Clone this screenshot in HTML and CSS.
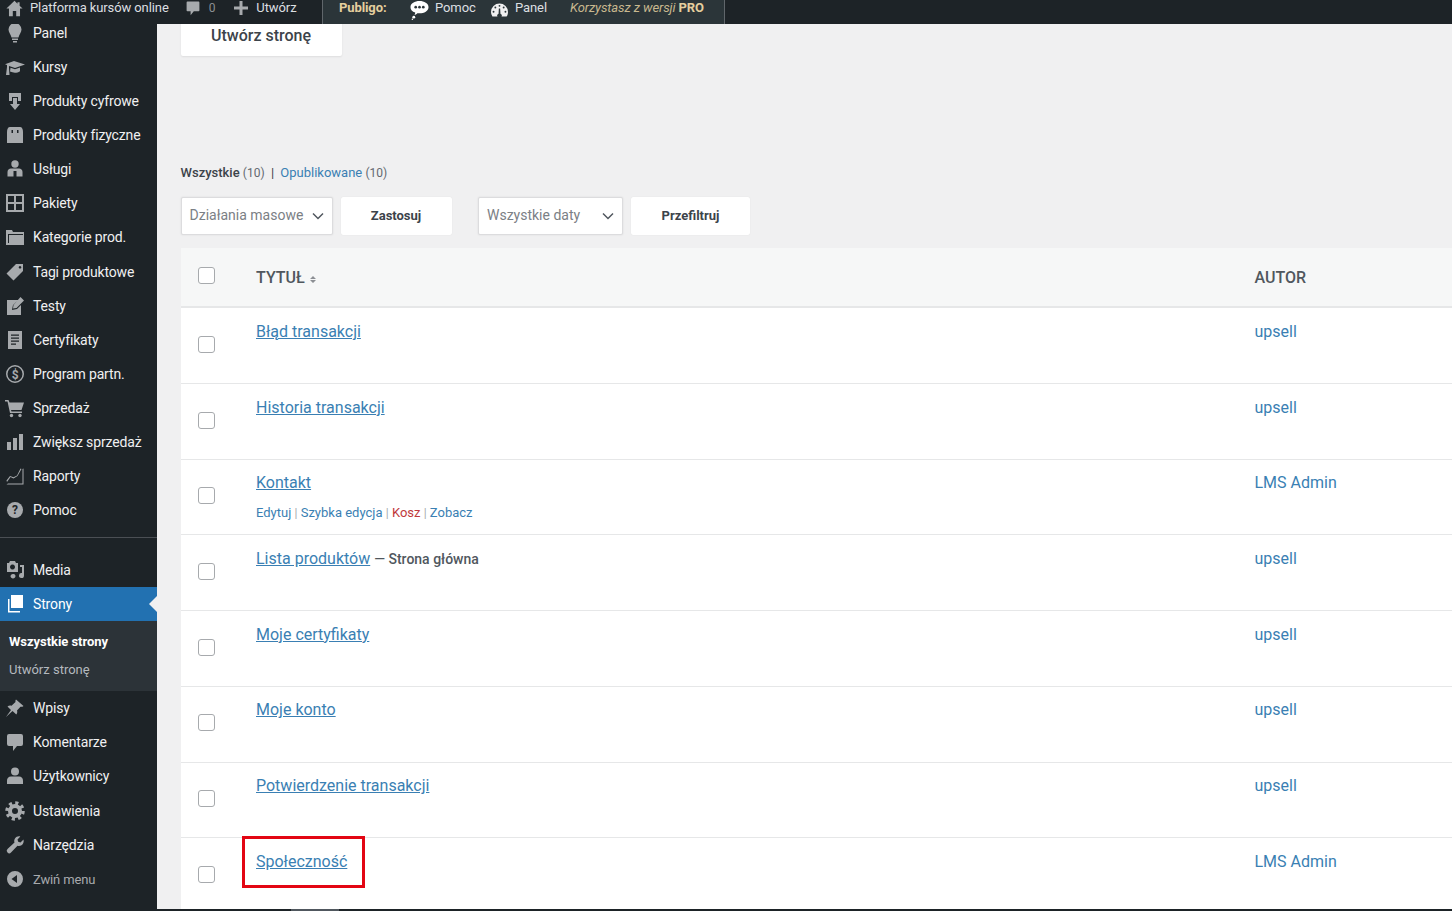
FILE: index.html
```html
<!DOCTYPE html>
<html lang="pl">
<head>
    <meta charset="UTF-8">
    <title>Strony</title>
    <link rel="stylesheet" href="styles.css">
</head>
<body>
<div class="page">
    <div class="topbar">
        <div class="bar-left">
            <svg class="bar-home" viewBox="0 0 20 20"><path d="M10 1 0.5 10h3v9h4.500v-6h4v6H16.500v-9h3L16 6.700V2.500h-2.500v1.900z"/></svg>
            <span class="bar-site">Platforma kursów online</span>
            <svg class="bar-comment" viewBox="0 0 20 20"><path d="M3 2h14a1 1 0 0 1 1 1v10a1 1 0 0 1-1 1h-6l-4 5v-5H3a1 1 0 0 1-1-1V3a1 1 0 0 1 1-1z"/></svg>
            <span class="bar-count">0</span>
            <svg class="bar-plus" viewBox="0 0 14 14"><path d="M5.500 0h3v5.500H14v3H8.500V14h-3V8.500H0v-3h5.500z"/></svg>
            <span class="bar-new">Utwórz</span>
        </div>
        <div class="bar-publigo">
            <strong class="publigo-name">Publigo:</strong>
            <svg class="chat-icon" viewBox="0 0 20 20"><path d="M10 0c5 0 9.500 2.500 9.500 6.500S15 13 10 13c-.8 0-1.600 0-2.300-.2C6.800 14 5.500 14.500 4.700 14.500c.5-.7.8-1.500.8-2.400C2.300 11 .5 9 .5 6.500.5 2.500 5 0 10 0z"/><circle cx="4" cy="17" r="1.500"/><circle cx="2.500" cy="19.200" r=".8"/><circle cx="6" cy="6.500" r="1.400" fill="#2b3539"/><circle cx="10" cy="6.500" r="1.400" fill="#2b3539"/><circle cx="14" cy="6.500" r="1.400" fill="#2b3539"/></svg>
            <span class="publigo-help">Pomoc</span>
            <svg class="gauge-icon" viewBox="0 0 18 14"><path d="M9 0a9 9 0 0 1 9 9c0 1.900-.5 3.600-1.500 5h-15A9 9 0 0 1 0 9a9 9 0 0 1 9-9z"/><g class="gauge-marks"><circle cx="9" cy="2.600" r="1"/><circle cx="4.600" cy="4.300" r="1"/><circle cx="13.400" cy="4.300" r="1"/><circle cx="2.700" cy="8.800" r="1"/><circle cx="15.300" cy="8.800" r="1"/><path d="M8.300 5.500h1.400l.3 5.600a2.300 2.300 0 1 1-2 0z"/></g></svg>
            <span class="publigo-panel">Panel</span>
            <span class="publigo-pro"><em>Korzystasz z wersji</em> <strong>PRO</strong></span>
        </div>
    </div>

    <div class="layout">
        <nav class="sidebar">
            <ul class="menu">
                <li><svg viewBox="0 0 20 20"><path d="M10 0a6.500 6.500 0 0 1 6.500 6.500c0 3-2.500 5-3 8h-7c-.5-3-3-5-3-8A6.500 6.500 0 0 1 10 0zM7 15.500h6V17H7zM8 18h4v1.500H8z"/></svg>Panel</li>
                <li><svg viewBox="0 0 20 20"><path d="M9 4 20 7.500 10 11 4 9v2l.5 7H1l1-8V8L0 7.200zM5.500 10.800 10 12.300l5-1.700v3.600c-3 2-6.500 2-10 .4z"/></svg>Kursy</li>
                <li><svg viewBox="0 0 20 20"><path d="M4 2h12v8h-3V6H7v4H4zM8 7h4v6h3l-5 6-5-6h3z"/></svg>Produkty cyfrowe</li>
                <li><svg viewBox="0 0 20 20"><path d="M5 2h10c2 0 3 2 3 5v11H2V7c0-3 1-5 3-5zM6.500 5v3h1.500V5zM12 5v3h1.500V5z"/></svg>Produkty fizyczne</li>
                <li><svg viewBox="0 0 20 20"><circle cx="10" cy="5" r="3.700"/><path d="M6 9.500h8c2 0 3.500 1.500 3.500 3.500v4.500h-6V12h-3v5.500h-6V13c0-2 1.500-3.500 3.500-3.500z"/></svg>Usługi</li>
                <li><svg viewBox="0 0 20 20"><path d="M1 1h18v18H1zM3 3v6h6V3zM11 3v6h6V3zM3 11v6h6v-6zM11 11v6h6v-6z"/></svg>Pakiety</li>
                <li><svg viewBox="0 0 20 20"><path d="M1 3h6l1 2h11v13H1zM3 7v9h15V7z"/><path d="M4 8h15v10H4z"/></svg>Kategorie prod.</li>
                <li><svg viewBox="0 0 20 20"><path d="M11 2h7v7l-9.500 9.500L1.500 11.500zM15 4a1.300 1.300 0 1 0 .01 0z" fill-rule="evenodd"/></svg>Tagi produktowe</li>
                <li><svg viewBox="0 0 20 20"><path d="M2 4h11L8 9l-1 5 5-1 4-4v10H2zM15.500 1 19 4.500 11.500 12 8 12.500l.5-3.500z"/></svg>Testy</li>
                <li><svg viewBox="0 0 20 20"><path d="M3 1h14v18H3zM6 4.500v1.200h8V4.500zM6 7.500v1.200h8V7.500zM6 10.500v1.200h8v-1.200zM6 13.500v1.200h5v-1.200z" fill-rule="evenodd"/></svg>Certyfikaty</li>
                <li><svg viewBox="0 0 20 20"><path d="M10 1a9 9 0 1 1 0 18 9 9 0 0 1 0-18zM10 2.500a7.500 7.500 0 1 0 0 15 7.500 7.500 0 0 0 0-15z" fill-rule="evenodd"/><text x="10" y="14.500" class="icon-glyph">$</text></svg>Program partn.</li>
                <li><svg viewBox="0 0 20 20"><path d="M0 2h3.500l1 2.500H19l-2.500 7.500H6l.5 1.500H17V15H5L2.500 3.500H0z"/><circle cx="6.500" cy="17.500" r="1.700"/><circle cx="15" cy="17.500" r="1.700"/></svg>Sprzedaż</li>
                <li><svg viewBox="0 0 20 20"><path d="M2 10h4v8H2zM8 6h4v12H8zM14 2h4v16h-4z"/></svg>Zwiększ sprzedaż</li>
                <li><svg viewBox="0 0 20 20"><path d="M1.500 18.500h17v-16l-1 .5v14.500H3z"/><path d="M2 16l3.500-5 3 1.500 4-2.500 4-7-1-.5L12 9.500 8.500 11.300 5 10 1.500 14.500z"/></svg>Raporty</li>
                <li><svg viewBox="0 0 20 20"><circle cx="10" cy="10" r="8"/><text x="10" y="14.300" class="icon-glyph icon-dark">?</text></svg>Pomoc</li>
            </ul>
            <div class="menu-sep"></div>
            <ul class="menu">
                <li><svg viewBox="0 0 20 20"><path d="M2 3h2l1-2h5l1 2h2v9H2zM7.500 4.500a2.500 2.500 0 1 0 .01 0zM15 5h4v10.500a2.500 2.500 0 1 1-2-2.400V7h-2zM8 14c1.200-.3 2.500.5 2.500 2s-1.200 2.500-2.500 2.500-2.500-1-2.500-2.200c0-1.100 1-2 2.500-2.300z" fill-rule="evenodd"/></svg>Media</li>
                <li class="menu-active"><svg viewBox="0 0 20 20"><path d="M6 1h12v13H6z"/><path d="M3 5h1.500v12H15v1.500H3z"/></svg>Strony</li>
            </ul>
            <ul class="submenu">
                <li class="submenu-current">Wszystkie strony</li>
                <li>Utwórz stronę</li>
            </ul>
            <ul class="menu">
                <li><svg viewBox="0 0 20 20"><path d="M11 1.500 18.500 8c-1 .8-2 1-3 .7L12 12.500c.5 1.500.3 2.800-.7 4L7.500 13 1 19l5-7-3.500-3.500c1.200-1 2.500-1.300 4-.8L10.500 4c-.2-1 0-2 .5-2.500z"/></svg>Wpisy</li>
                <li><svg viewBox="0 0 20 20"><path d="M4 2h12a2 2 0 0 1 2 2v8a2 2 0 0 1-2 2h-4l-4 5v-5H4a2 2 0 0 1-2-2V4a2 2 0 0 1 2-2z"/></svg>Komentarze</li>
                <li><svg viewBox="0 0 20 20"><circle cx="10" cy="5.500" r="4"/><path d="M6 10.500h8c2.500 0 4 1.700 4 4v3.500H2v-3.500c0-2.300 1.500-4 4-4z"/></svg>Użytkownicy</li>
                <li><svg viewBox="0 0 20 20"><circle cx="10" cy="10" r="5" fill="none" stroke-width="4" class="gear-ring"/><circle cx="10" cy="10" r="8" fill="none" stroke-width="3.500" stroke-dasharray="3.100 3.180" class="gear-ring"/></svg>Ustawienia</li>
                <li><svg viewBox="0 0 20 20"><path d="M18.500 4.500c.6 2.300-.2 4.500-2 5.700-1.300.8-2.700.9-4 .5L6 17.500a2.400 2.400 0 0 1-3.500-3.500l7-6.500c-.5-1.400-.3-2.900.5-4.100C11.200 1.700 13.300 1 15.300 1.500L12.500 4.500l.7 2.300 2.300.7z"/></svg>Narzędzia</li>
                <li class="menu-collapse"><svg viewBox="0 0 20 20"><path d="M10 2a8 8 0 1 1 0 16 8 8 0 0 1 0-16zM12 6l-5.500 4 5.500 4z" fill-rule="evenodd"/></svg>Zwiń menu</li>
            </ul>
        </nav>

        <main class="content">
            <div class="new-page">Utwórz stronę</div>

            <div class="views">
                <strong>Wszystkie</strong> <span class="count">(10)</span>
                <span class="views-sep">|</span>
                <a>Opublikowane</a> <span class="count">(10)</span>
            </div>

            <div class="filters">
                <div class="select select-bulk">Działania masowe<svg viewBox="0 0 12 8"><path d="M1 1.500 6 6.500l5-5" /></svg></div>
                <div class="action action-apply">Zastosuj</div>
                <div class="select select-dates">Wszystkie daty<svg viewBox="0 0 12 8"><path d="M1 1.500 6 6.500l5-5" /></svg></div>
                <div class="action action-filter">Przefiltruj</div>
            </div>

            <div class="list">
                <div class="list-head">
                    <div class="cell-check"><span class="checkbox"></span></div>
                    <div class="head-title">TYTUŁ <svg class="sort" viewBox="0 0 8 7"><path d="M4 0 7 3H1zM1 4h6L4 7z"/></svg></div>
                    <div class="head-author">AUTOR</div>
                </div>
                <div class="row">
                    <div class="cell-check"><span class="checkbox"></span></div>
                    <div class="cell-title"><a class="title-link">Błąd transakcji</a></div>
                    <div class="cell-author">upsell</div>
                </div>
                <div class="row">
                    <div class="cell-check"><span class="checkbox"></span></div>
                    <div class="cell-title"><a class="title-link">Historia transakcji</a></div>
                    <div class="cell-author">upsell</div>
                </div>
                <div class="row">
                    <div class="cell-check"><span class="checkbox"></span></div>
                    <div class="cell-title">
                        <a class="title-link">Kontakt</a>
                        <div class="row-actions">
                            <a>Edytuj</a> <span class="pipe">|</span> <a>Szybka edycja</a> <span class="pipe">|</span> <a class="trash">Kosz</a> <span class="pipe">|</span> <a>Zobacz</a>
                        </div>
                    </div>
                    <div class="cell-author">LMS Admin</div>
                </div>
                <div class="row">
                    <div class="cell-check"><span class="checkbox"></span></div>
                    <div class="cell-title"><a class="title-link">Lista produktów</a> <span class="post-state">— Strona główna</span></div>
                    <div class="cell-author">upsell</div>
                </div>
                <div class="row">
                    <div class="cell-check"><span class="checkbox"></span></div>
                    <div class="cell-title"><a class="title-link">Moje certyfikaty</a></div>
                    <div class="cell-author">upsell</div>
                </div>
                <div class="row">
                    <div class="cell-check"><span class="checkbox"></span></div>
                    <div class="cell-title"><a class="title-link">Moje konto</a></div>
                    <div class="cell-author">upsell</div>
                </div>
                <div class="row">
                    <div class="cell-check"><span class="checkbox"></span></div>
                    <div class="cell-title"><a class="title-link">Potwierdzenie transakcji</a></div>
                    <div class="cell-author">upsell</div>
                </div>
                <div class="row">
                    <div class="cell-check"><span class="checkbox"></span></div>
                    <div class="cell-title cell-marked"><a class="title-link">Społeczność</a><span class="highlight"></span></div>
                    <div class="cell-author">LMS Admin</div>
                </div>
            </div>
        </main>
    </div>
    <div class="bottom-strip"><span class="bottom-thumb"></span></div>
</div>
</body>
</html>
```

FILE: styles.css
```css
* {
    box-sizing: border-box;
}
html, body {
    margin: 0;
    height: 100%;
    overflow: hidden;
}
body {
    font-family: Roboto, "Liberation Sans", sans-serif;
    font-size: 14px;
    color: #50575e;
    background-color: #f0f0f1;
}
ul {
    list-style: none;
    margin: 0;
    padding: 0;
}
.page {
    display: flex;
    flex-direction: column;
    height: 911px;
}

/* top bar */
.topbar {
    display: flex;
    height: 24px;
    flex: none;
    background-color: #1d2327;
    color: #dcdfe1;
    font-size: 13px;
    line-height: 16px;
    letter-spacing: -0.1px;
    z-index: 2;
}
.topbar svg {
    fill: #a7aaad;
    flex: none;
}
.bar-left {
    display: flex;
    align-items: center;
    width: 322px;
    height: 24px;
    padding: 0 0 8px 6px;
}
.bar-home {
    width: 17px;
    height: 17px;
}
.bar-site {
    margin-left: 7px;
    white-space: nowrap;
}
.bar-comment {
    width: 16px;
    height: 16px;
    margin-left: 16px;
}
.bar-count {
    margin-left: 8px;
    color: #8c8f94;
    font-size: 12px;
}
.bar-plus {
    width: 14px;
    height: 14px;
    margin-left: 19px;
}
.bar-new {
    margin-left: 8px;
}
.bar-publigo {
    display: flex;
    align-items: center;
    width: 403px;
    height: 24px;
    padding: 0 0 8px 16px;
    background-color: #2b3539;
    border-left: 1px solid #60666b;
    border-right: 1px solid #60666b;
    white-space: nowrap;
}
.publigo-name {
    color: #e5cf9e;
    font-weight: 700;
    width: 71px;
}
.bar-publigo .chat-icon {
    width: 19px;
    height: 19px;
    fill: #fff;
    margin-top: 4px;
}
.publigo-help {
    margin-left: 6px;
    width: 56px;
}
.bar-publigo .gauge-icon {
    width: 17px;
    height: 14px;
    fill: #f0f0f1;
    margin-top: 4px;
}
.bar-publigo .gauge-marks {
    fill: #2b3539;
}
.publigo-panel {
    margin-left: 7px;
    width: 55px;
}
.publigo-pro {
    color: #c8b88f;
}
.publigo-pro strong {
    color: #e5cf9e;
}

.layout {
    display: flex;
    flex: 1;
    min-height: 0;
}

/* sidebar */
.sidebar {
    width: 157px;
    flex: none;
    background-color: #1d2327;
    color: #f0f0f1;
    overflow: hidden;
}
.sidebar > .menu:first-child {
    margin-top: -8.4px;
}
.menu li {
    display: flex;
    align-items: center;
    gap: 8px;
    height: 34.13px;
    padding-left: 5px;
    white-space: nowrap;
    letter-spacing: -0.15px;
    position: relative;
}
.menu svg {
    width: 20px;
    height: 20px;
    flex: none;
    fill: #a7aaad;
}
.icon-glyph {
    font-size: 12px;
    font-weight: 700;
    text-anchor: middle;
    fill: #a7aaad;
}
.icon-dark {
    fill: #1d2327;
}
.gear-ring {
    stroke: #a7aaad;
}
.menu-sep {
    height: 1px;
    margin: 10px 0 14.4px;
    background-color: #4b4f54;
}
.menu .menu-active {
    background-color: #2271b1;
    color: #fff;
}
.menu .menu-active svg {
    fill: #fff;
}
.menu-active::after {
    content: "";
    position: absolute;
    right: 0;
    top: 50%;
    margin-top: -8px;
    border: 8px solid transparent;
    border-right-color: #f0f0f1;
    border-left-width: 0;
}
.menu .menu-collapse {
    color: #a7aaad;
    font-size: 13px;
    padding-top: 1px;
}
.submenu {
    height: 70px;
    padding: 7px 0 0 9px;
    background-color: #2c3338;
    font-size: 13px;
    color: #b4b9be;
}
.submenu li {
    height: 28px;
    line-height: 28px;
}
.submenu .submenu-current {
    color: #fff;
    font-weight: 700;
    letter-spacing: -0.05px;
}

/* content */
.content {
    flex: 1;
    min-width: 0;
    padding-left: 23.5px;
    overflow: hidden;
}
.new-page {
    width: 161px;
    height: 42px;
    margin-top: -10px;
    padding-top: 12px;
    background-color: #fff;
    box-shadow: 0 1px 2px rgba(0, 0, 0, 0.08);
    border-radius: 2px;
    color: #3c434a;
    font-size: 16px;
    font-weight: 500;
    line-height: 20px;
    text-align: center;
}
.views {
    margin-top: 107px;
    font-size: 13px;
    line-height: 20px;
    color: #3c434a;
    white-space: nowrap;
}
.views strong {
    font-weight: 500;
}
.views a {
    color: #3a7fb3;
}
.count {
    color: #646970;
    font-size: 12px;
}
.views-sep {
    margin: 0 3px;
}
.filters {
    display: flex;
    height: 38px;
    margin-top: 13.5px;
}
.select {
    display: flex;
    align-items: center;
    justify-content: space-between;
    height: 38px;
    padding: 0 8px 2px 8px;
    background-color: #fff;
    border: 1px solid #dcdcde;
    box-shadow: 0 0 2px rgba(0, 0, 0, 0.1);
    border-radius: 2px;
    color: #7b8085;
    white-space: nowrap;
}
.select svg {
    width: 12px;
    height: 8px;
    margin-top: 3px;
    fill: none;
    stroke: #50575e;
    stroke-width: 1.500;
}
.select-bulk {
    width: 152px;
}
.select-dates {
    width: 145px;
    margin-left: 26.500px;
}
.action {
    height: 38px;
    background-color: #fff;
    border-radius: 2px;
    box-shadow: 0 0 1px rgba(0, 0, 0, 0.12);
    color: #3c434a;
    font-size: 13px;
    font-weight: 700;
    line-height: 38px;
    text-align: center;
}
.action-apply {
    width: 111px;
    margin-left: 8px;
}
.action-filter {
    width: 119px;
    margin-left: 8px;
}

/* page list */
.list {
    margin-top: 13.6px;
    background-color: #fff;
}
.list-head, .row {
    display: grid;
    grid-template-columns: 75.5px 998.5px 1fr;
}
.list-head {
    height: 60.3px;
    align-items: center;
    background-color: #f6f7f7;
    border-bottom: 2px solid #e6e7e8;
    font-size: 16px;
    font-weight: 500;
    color: #50575e;
}
.row {
    height: 75.7px;
    border-bottom: 1px solid #e6e7e8;
    font-size: 16px;
    line-height: 20px;
    padding-top: 13.6px;
}
.cell-check {
    display: flex;
    padding-left: 17.500px;
}
.row .cell-check {
    padding-top: 14px;
}
.list-head .cell-check {
    margin-top: -3px;
}
.checkbox {
    display: block;
    width: 17px;
    height: 17px;
    background-color: #fff;
    border: 1px solid #a7aaad;
    border-radius: 3px;
}
.sort {
    width: 8px;
    height: 7px;
    fill: #8c8f94;
}
.title-link {
    color: #3a7fb3;
    text-decoration: underline;
}
.cell-author {
    color: #3a7fb3;
}
.row-actions {
    margin-top: 10px;
    font-size: 13px;
    color: #a7aaad;
    white-space: nowrap;
}
.row-actions a {
    color: #3a7fb3;
}
.row-actions .trash {
    color: #c0393b;
}
.pipe {
    font-size: 12px;
}
.post-state {
    color: #50575e;
    font-size: 14px;
    font-weight: 500;
}
.cell-marked {
    position: relative;
}
.highlight {
    position: absolute;
    left: -14px;
    top: -16px;
    width: 123px;
    height: 52px;
    border: 3px solid #e30613;
}

.bottom-strip {
    height: 2px;
    flex: none;
    background-color: #1d2327;
    z-index: 2;
}
.bottom-thumb {
    display: block;
    width: 48px;
    height: 2px;
    margin-left: 291px;
    background-color: #50575e;
}
```
